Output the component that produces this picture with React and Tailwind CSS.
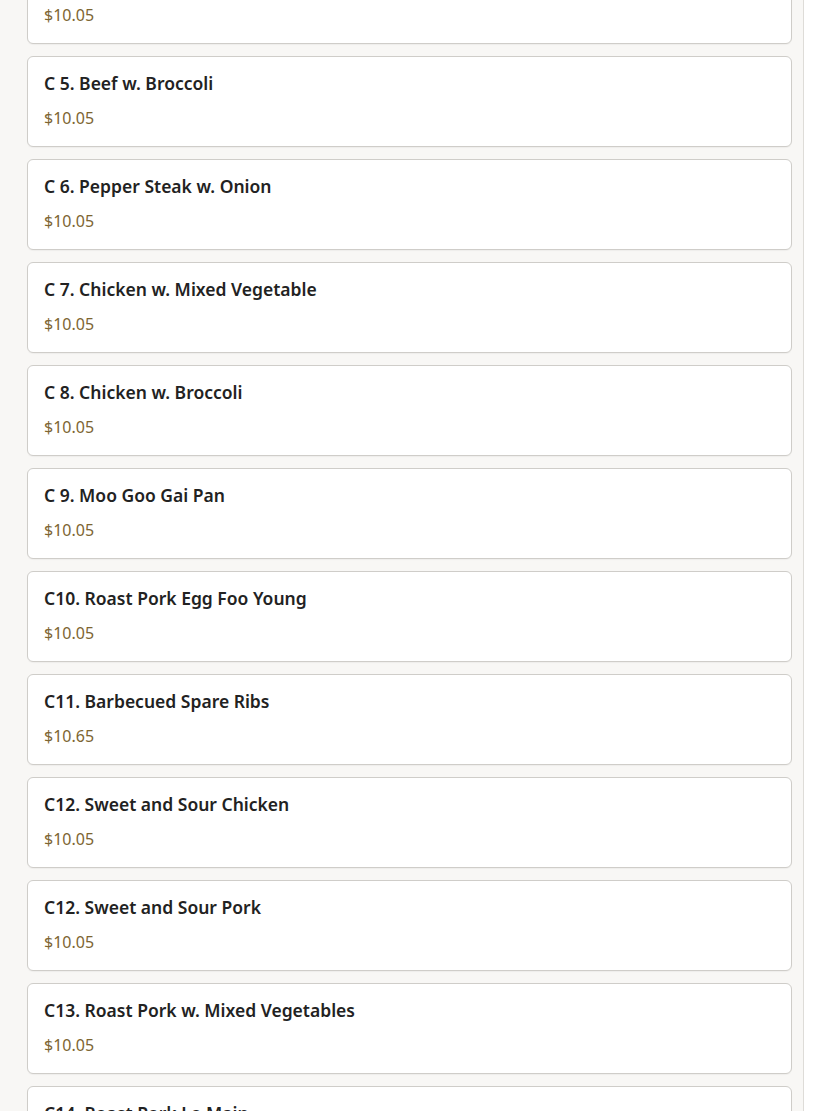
const ITEMS = [
  { name: 'C 4. Shrimp w. Lobster Sauce', price: '$10.05' },
  { name: 'C 5. Beef w. Broccoli', price: '$10.05' },
  { name: 'C 6. Pepper Steak w. Onion', price: '$10.05' },
  { name: 'C 7. Chicken w. Mixed Vegetable', price: '$10.05' },
  { name: 'C 8. Chicken w. Broccoli', price: '$10.05' },
  { name: 'C 9. Moo Goo Gai Pan', price: '$10.05' },
  { name: 'C10. Roast Pork Egg Foo Young', price: '$10.05' },
  { name: 'C11. Barbecued Spare Ribs', price: '$10.65' },
  { name: 'C12. Sweet and Sour Chicken', price: '$10.05' },
  { name: 'C12. Sweet and Sour Pork', price: '$10.05' },
  { name: 'C13. Roast Pork w. Mixed Vegetables', price: '$10.05' },
  { name: 'C14. Roast Pork Lo Main', price: '$10.05' },
]

function MenuCard({ name, price }) {
  return (
    <div className="rounded-md border border-[#cfcdc9] bg-white px-4 pt-3 pb-4 shadow-[0_1px_1px_rgba(0,0,0,0.04)]">
      <p className="text-[17.5px] font-semibold leading-7 text-[#222]">{name}</p>
      <p className="mt-[9px] text-[16px] leading-6 text-[#7d6532]">{price}</p>
    </div>
  )
}

export default function App() {
  return (
    <div className="h-[1111px] overflow-hidden bg-white" style={{ fontFamily: "'Noto Sans', 'Open Sans', sans-serif" }}>
      <div className="flex h-full w-[804px] flex-col overflow-hidden border-r border-[#dedcd8] bg-[#f8f7f5] pl-[27px] pr-[11px]">
        <div className="-mt-[47px] flex flex-col gap-3">
          {ITEMS.map((item, i) => (
            <MenuCard key={i} {...item} />
          ))}
        </div>
      </div>
    </div>
  )
}
